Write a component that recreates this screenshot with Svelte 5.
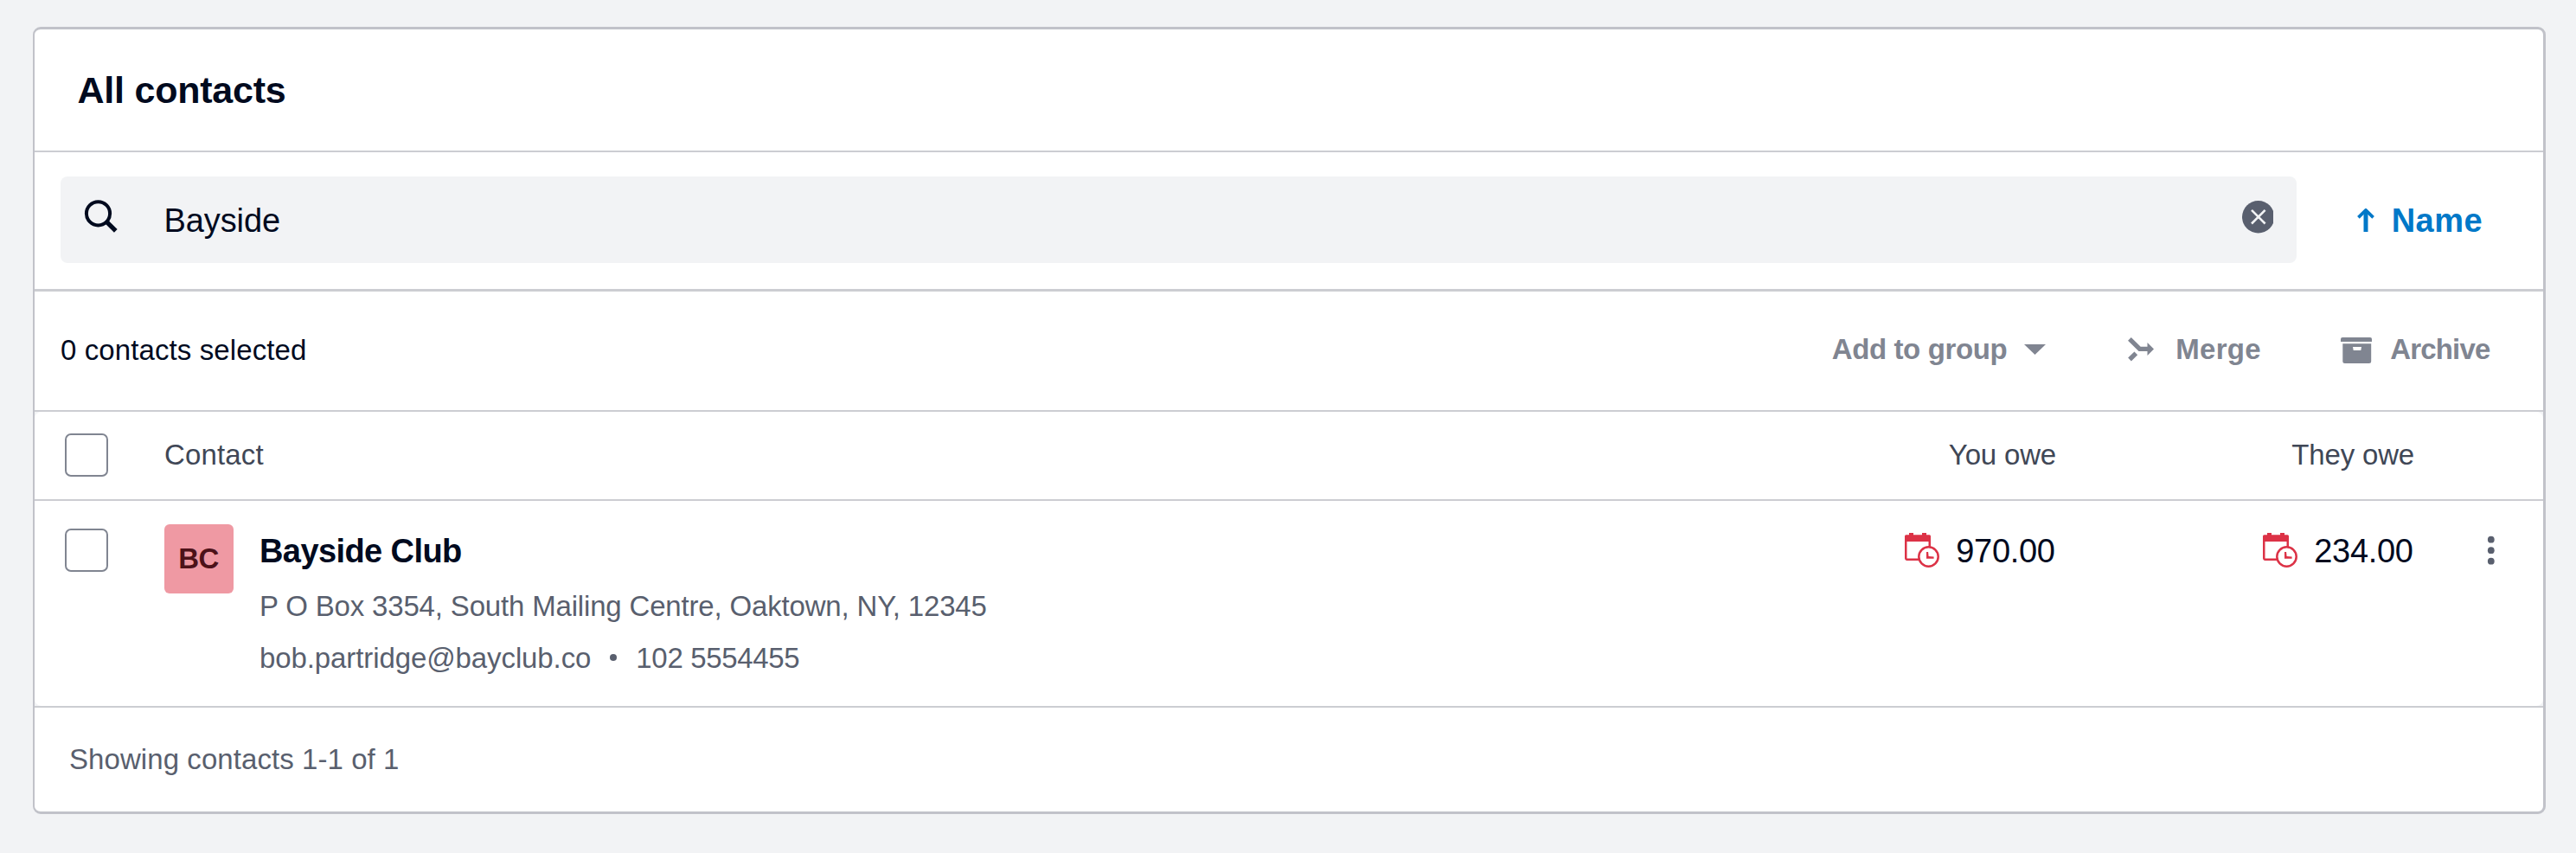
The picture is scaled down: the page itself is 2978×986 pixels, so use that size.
<script>
  const contacts = [
    {
      initials: 'BC',
      name: 'Bayside Club',
      address: 'P O Box 3354, South Mailing Centre, Oaktown, NY, 12345',
      email: 'bob.partridge@bayclub.co',
      phone: '102 5554455',
      youOwe: '970.00',
      theyOwe: '234.00'
    }
  ];
</script>

{#snippet overdueIcon()}
  <svg class="overdue" width="40" height="40" viewBox="0 0 40 40">
    <path d="M5 0h5v2.3h10V0h5v2.3h3.5A1.5 1.5 0 0 1 30 3.8V10H0V3.8a1.5 1.5 0 0 1 1.5-1.5H5z" fill="#dc3246" />
    <path d="M1.25 9v20.3a1.4 1.4 0 0 0 1.4 1.4H17M28.75 9v7" fill="none" stroke="#dc3246" stroke-width="2.5" />
    <circle cx="27.5" cy="27.5" r="11.2" fill="#fff" stroke="#dc3246" stroke-width="2.5" />
    <path d="M25 22h2.1l.5 5 6 .6v2.2H25z" fill="#dc3246" />
  </svg>
{/snippet}

<section class="card">
  <header><h1>All contacts</h1></header>

  <div class="search-row">
    <div class="field">
      <svg class="glass" width="40" height="40" viewBox="0 0 40 40" fill="none" stroke="#000a1e">
        <circle cx="16.5" cy="16.8" r="13.6" stroke-width="4" />
        <path d="M25.4 25.6 36.8 36.9" stroke-width="5.2" />
      </svg>
      <span class="query">Bayside</span>
      <svg class="clear" width="36" height="38" viewBox="0 0 36 38">
        <circle cx="18.7" cy="18.8" r="18.7" fill="#595f6e" />
        <path d="M11 10.9 26.6 26.5M26.6 10.9 11 26.5" stroke="#f2f3f5" stroke-width="2.6" />
      </svg>
    </div>
    <button class="sort">
      <svg width="20" height="27" viewBox="0 0 20 27" fill="none" stroke="#0078c8">
        <path d="M10 3v24" stroke-width="5" />
        <path d="M1.4 10.4 10 1.9l8.6 8.5" stroke-width="3.7" />
      </svg>
      <span>Name</span>
    </button>
  </div>

  <div class="toolbar">
    <span class="count">0 contacts selected</span>
    <button class="group">
      <span>Add to group</span>
      <svg class="caret" width="25" height="12" viewBox="0 0 25 12"><path d="M0 0h25L12.5 12z" fill="#808591" /></svg>
    </button>
    <button class="merge">
      <svg width="30" height="28" viewBox="0 0 30 28">
        <path d="M1.9 1.9 13.6 13.4H23M2 25.5 9.3 18.3" fill="none" stroke="#808591" stroke-width="5.3" />
        <path d="M22.5 6 30 13.4 22.5 21z" fill="#808591" />
      </svg>
      <span>Merge</span>
    </button>
    <button class="archive">
      <svg width="36" height="30" viewBox="0 0 36 30" fill="#808591">
        <path d="M2 0h32a2 2 0 0 1 2 2v3H0V2a2 2 0 0 1 2-2z" />
        <path fill-rule="evenodd" d="M2.3 7.2h32.9V27.5a2.5 2.5 0 0 1-2.5 2.5H4.8a2.5 2.5 0 0 1-2.5-2.5zM14 11l.7 4h8.6l.7-4z" />
      </svg>
      <span>Archive</span>
    </button>
  </div>

  <div class="table-wrap">
    <div class="table">
      <div class="row head">
        <span class="checkbox"></span>
        <span class="col-contact">Contact</span>
        <span class="col-you">You owe</span>
        <span class="col-they">They owe</span>
      </div>
      {#each contacts as c}
        <div class="row contact">
          <span class="checkbox"></span>
          <div class="who">
            <span class="avatar">{c.initials}</span>
            <div class="details">
              <h2>{c.name}</h2>
              <p class="address">{c.address}</p>
              <p class="reach"><span class="email">{c.email}</span><i class="dot"></i><span class="phone">{c.phone}</span></p>
            </div>
          </div>
          <div class="amount">{@render overdueIcon()}<span>{c.youOwe}</span></div>
          <div class="amount">{@render overdueIcon()}<span>{c.theyOwe}</span></div>
          <svg class="more" width="10" height="34" viewBox="0 0 10 34" fill="#595f6e">
            <circle cx="4.8" cy="4.7" r="3.9" />
            <circle cx="4.8" cy="17.2" r="3.9" />
            <circle cx="4.8" cy="29.7" r="3.9" />
          </svg>
        </div>
      {/each}
    </div>
  </div>

  <footer>Showing contacts 1-1 of 1</footer>
</section>

<style>
  :global(body) {
    background: #f2f3f5;
  }
  :global(#app) {
    display: flow-root;
  }
  .card {
    box-sizing: border-box;
    height: 910px;
    margin: 31px 35px 0 38px;
    border: 3px solid #c1c2c9;
    border-left-width: 2px;
    border-radius: 9px;
    background: #fff;
    overflow: hidden;
    color: #000a1e;
    font: 400 33px/37px "Liberation Sans", Arial, sans-serif;
    white-space: nowrap;
  }
  h1, h2, p {
    margin: 0;
  }
  svg {
    display: block;
    flex: none;
  }
  button {
    display: flex;
    align-items: flex-start;
    padding: 0;
    border: 0;
    background: none;
    color: #808591;
    font: 700 33px/37px "Liberation Sans", Arial, sans-serif;
  }
  header {
    box-sizing: border-box;
    height: 142px;
    padding: 46px 0 0 49.5px;
    border-bottom: 2px solid #cccdd2;
  }
  h1 {
    font-size: 43px;
    line-height: 48px;
    letter-spacing: -0.228px;
  }
  .search-row {
    box-sizing: border-box;
    display: flex;
    gap: 70px;
    height: 161px;
    padding: 28px 70px 0 30px;
    border-bottom: 3px solid #cccdd2;
  }
  .field {
    box-sizing: border-box;
    flex: 1;
    display: flex;
    align-items: flex-start;
    height: 100px;
    padding: 0 27px 0 27px;
    border-radius: 8px;
    background: #f2f3f5;
  }
  .glass {
    margin-top: 26px;
  }
  .query {
    flex: 1;
    padding: 30px 0 0 52.6px;
    font-size: 38px;
    line-height: 42px;
    letter-spacing: -0.12px;
  }
  .clear {
    margin-top: 28px;
  }
  .sort {
    gap: 19.5px;
    padding-top: 30px;
    color: #0078c8;
    font-size: 38px;
    line-height: 42px;
    letter-spacing: 0.445px;
  }
  .sort svg {
    margin-top: 7px;
  }
  .toolbar {
    box-sizing: border-box;
    display: flex;
    align-items: flex-start;
    height: 139px;
    padding: 48px 61.5px 0 30px;
    border-bottom: 2px solid #cccdd2;
  }
  .count {
    flex: 1;
    padding-top: 1px;
    letter-spacing: 0.103px;
  }
  .group {
    gap: 20px;
    letter-spacing: -0.38px;
  }
  .caret {
    margin-top: 13px;
  }
  .merge {
    gap: 25px;
    margin-left: 95px;
    letter-spacing: 0.289px;
  }
  .archive {
    gap: 21px;
    margin-left: 92.4px;
    letter-spacing: -0.834px;
  }
  .merge svg, .archive svg {
    margin-top: 5px;
  }
  .table-wrap {
    background: #f2f3f5;
  }
  .table {
    border-radius: 8px;
    background: #fff;
  }
  .row {
    box-sizing: border-box;
    display: grid;
    grid-template-columns: 115px 1fr 414px 414px 149px;
    align-items: start;
    padding-left: 35px;
  }
  .head {
    height: 103px;
    border-bottom: 2px solid #cccdd2;
    color: #404756;
  }
  .head span:not(.checkbox) {
    padding-top: 31px;
  }
  .checkbox {
    box-sizing: border-box;
    width: 50px;
    height: 50px;
    margin-top: 25px;
    border: 2px solid #808591;
    border-radius: 7px;
    background: #fff;
  }
  .col-contact {
    letter-spacing: 0.15px;
  }
  .col-you, .col-they {
    text-align: right;
    letter-spacing: -0.18px;
  }
  .contact {
    height: 237px;
  }
  .contact .checkbox {
    margin-top: 32px;
  }
  .who {
    display: flex;
    align-items: flex-start;
    gap: 30px;
  }
  .avatar {
    box-sizing: border-box;
    width: 80px;
    height: 80px;
    margin-top: 27px;
    padding: 21px 1px 0 0;
    border-radius: 6px;
    background: #ef99a3;
    color: #4d1219;
    font-weight: 700;
    letter-spacing: -0.6px;
    text-align: center;
  }
  h2 {
    padding: 37px 0 13px;
    font-size: 38px;
    line-height: 42px;
    letter-spacing: -0.592px;
  }
  .address, .reach {
    line-height: 60px;
    color: #595f6e;
    letter-spacing: -0.172px;
  }
  .reach {
    display: flex;
  }
  .email {
    letter-spacing: -0.1px;
  }
  .phone {
    letter-spacing: -0.335px;
  }
  .dot {
    width: 8px;
    height: 8px;
    margin: 25px 22px 0 22px;
    border-radius: 50%;
    background: #595f6e;
  }
  .amount {
    display: flex;
    justify-content: flex-end;
    gap: 19.7px;
    padding: 37px 1.4px 0 0;
    font-size: 38px;
    line-height: 42px;
    letter-spacing: -0.32px;
  }
  .more {
    margin: 40px 0 0 84px;
  }
  footer {
    box-sizing: border-box;
    height: 122px;
    padding: 41px 0 0 40px;
    border-top: 2px solid #cccdd2;
    color: #595f6e;
    letter-spacing: 0.07px;
  }
</style>
